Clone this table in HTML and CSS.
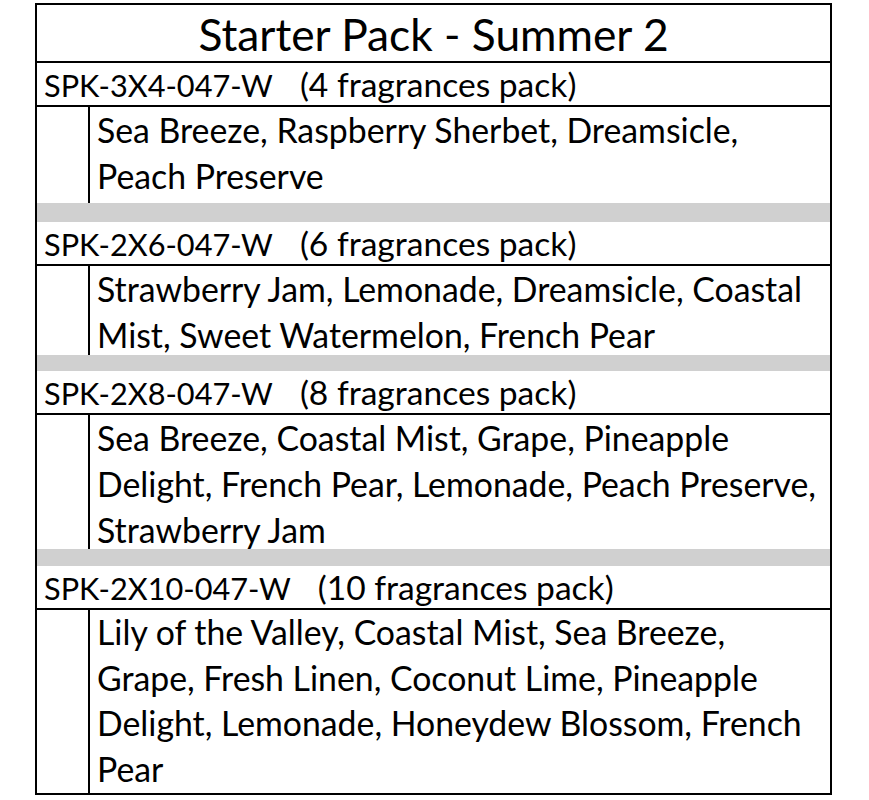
FILE: index.html
```html
<!DOCTYPE html>
<html>
<head>
<meta charset="utf-8">
<link rel="stylesheet" href="styles.css">
</head>
<body>
<div class="sheet">
  <div class="title">Starter Pack - Summer 2</div>

  <div class="head"><span class="code">SPK-3X4-047-W</span><span class="pack">(4 fragrances pack)</span></div>
  <div class="body r1">
    <div class="indent"></div>
    <div class="text">Sea Breeze, Raspberry Sherbet, Dreamsicle,<br>Peach Preserve</div>
  </div>
  <div class="gap g1"></div>

  <div class="head"><span class="code">SPK-2X6-047-W</span><span class="pack">(6 fragrances pack)</span></div>
  <div class="body r2">
    <div class="indent"></div>
    <div class="text">Strawberry Jam, Lemonade, Dreamsicle, Coastal<br>Mist, Sweet Watermelon, French Pear</div>
  </div>
  <div class="gap g2"></div>

  <div class="head"><span class="code">SPK-2X8-047-W</span><span class="pack">(8 fragrances pack)</span></div>
  <div class="body r3">
    <div class="indent"></div>
    <div class="text">Sea Breeze, Coastal Mist, Grape, Pineapple<br>Delight, French Pear, Lemonade, Peach Preserve,<br>Strawberry Jam</div>
  </div>
  <div class="gap g3"></div>

  <div class="head"><span class="code">SPK-2X10-047-W</span><span class="pack">(10 fragrances pack)</span></div>
  <div class="body r4">
    <div class="indent"></div>
    <div class="text">Lily of the Valley, Coastal Mist, Sea Breeze,<br>Grape, Fresh Linen, Coconut Lime, Pineapple<br>Delight, Lemonade, Honeydew Blossom, French<br>Pear</div>
  </div>
</div>
</body>
</html>
```

FILE: styles.css
```css
html, body {
  margin: 0;
  padding: 0;
  background: #fff;
}
body {
  font-family: "Lato", "Liberation Sans", sans-serif;
  color: #000;
}
.sheet {
  margin: 3px 0 0 35px;
  width: 797px;
  box-sizing: border-box;
  border: 2px solid #000;
}
.title {
  height: 58px;
  box-sizing: border-box;
  border-bottom: 2px solid #000;
  text-align: center;
  font-size: 44.3px;
  line-height: 58px;
}
.head {
  height: 44px;
  box-sizing: border-box;
  border-bottom: 2px solid #000;
  padding-left: 7px;
  line-height: 42px;
  white-space: nowrap;
}
.code {
  font-size: 30.7px;
}
.pack {
  font-size: 33.6px;
  margin-left: 27px;
}
.body {
  display: flex;
}
.indent {
  width: 51px;
  flex: none;
  border-right: 2px solid #000;
}
.text {
  padding-left: 7px;
  font-size: 33.8px;
  line-height: 46px;
  white-space: nowrap;
}
.r1 { height: 96px; }
.r2 { height: 89px; }
.r3 { height: 134px; }
.r4 { height: 183px; }
.r4 .text { line-height: 45.5px; }
.gap { background: #d0d0d0; }
.g1 { height: 19px; }
.g2 { height: 16px; }
.g3 { height: 17px; }
```
